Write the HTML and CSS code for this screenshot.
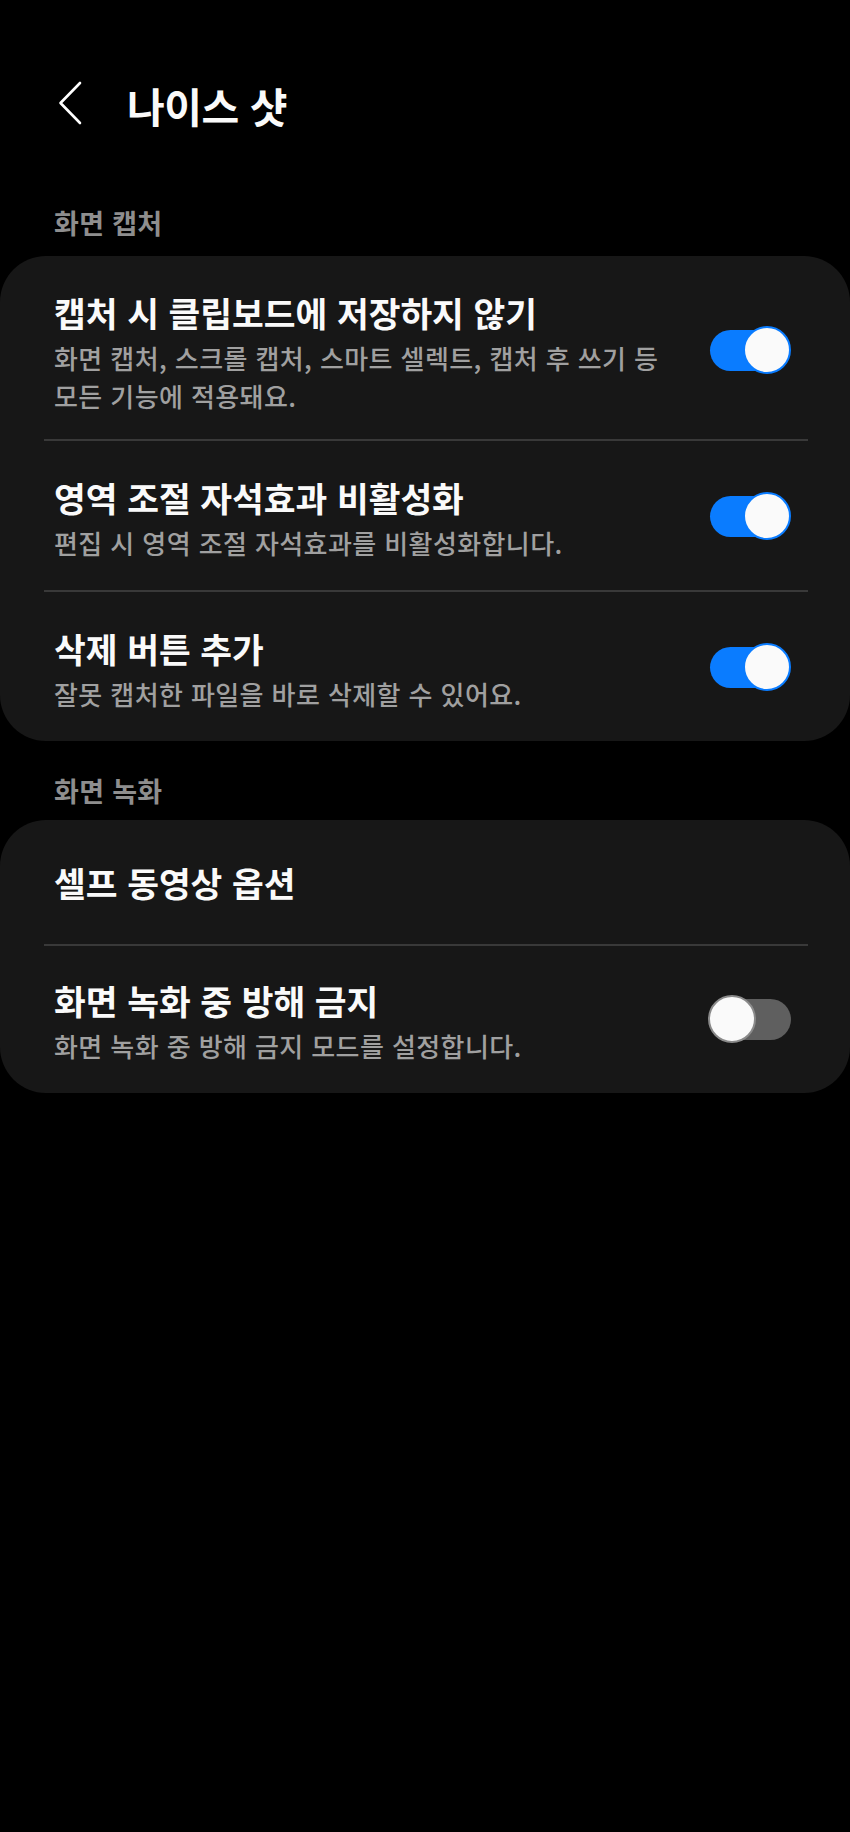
FILE: index.html
```html
<!DOCTYPE html>
<html lang="ko">
<head>
<meta charset="utf-8">
<title>나이스 샷</title>
<link rel="stylesheet" href="styles.css">
</head>
<body>
<div class="page">
  <header class="appbar">
    <svg class="back" width="24" height="44" viewBox="0 0 24 44" aria-hidden="true">
      <path d="M22 2 L2.5 22 L22 42" fill="none" stroke="#ffffff" stroke-width="2.6" stroke-linecap="round" stroke-linejoin="round"/>
    </svg>
    <h1 class="title">나이스 샷</h1>
  </header>

  <div class="section-label first">화면 캡처</div>
  <div class="card">
    <div class="item two-line">
      <div class="text">
        <div class="item-title">캡처 시 클립보드에 저장하지 않기</div>
        <div class="item-sub">화면 캡처, 스크롤 캡처, 스마트 셀렉트, 캡처 후 쓰기 등<br>모든 기능에 적용돼요.</div>
      </div>
      <div class="toggle on"><span class="knob"></span></div>
    </div>
    <div class="divider"></div>
    <div class="item">
      <div class="text">
        <div class="item-title">영역 조절 자석효과 비활성화</div>
        <div class="item-sub">편집 시 영역 조절 자석효과를 비활성화합니다.</div>
      </div>
      <div class="toggle on"><span class="knob"></span></div>
    </div>
    <div class="divider"></div>
    <div class="item">
      <div class="text">
        <div class="item-title">삭제 버튼 추가</div>
        <div class="item-sub">잘못 캡처한 파일을 바로 삭제할 수 있어요.</div>
      </div>
      <div class="toggle on"><span class="knob"></span></div>
    </div>
  </div>

  <div class="section-label">화면 녹화</div>
  <div class="card">
    <div class="item single">
      <div class="text">
        <div class="item-title">셀프 동영상 옵션</div>
      </div>
    </div>
    <div class="divider"></div>
    <div class="item last">
      <div class="text">
        <div class="item-title">화면 녹화 중 방해 금지</div>
        <div class="item-sub">화면 녹화 중 방해 금지 모드를 설정합니다.</div>
      </div>
      <div class="toggle off"><span class="knob"></span></div>
    </div>
  </div>
</div>
</body>
</html>
```

FILE: styles.css
```css
html, body {
  margin: 0;
  padding: 0;
  background: #000000;
}

body {
  font-family: "Noto Sans CJK KR", "Noto Sans", sans-serif;
  color: #ffffff;
  width: 850px;
  min-height: 1832px;
}

.page {
  display: flex;
  flex-direction: column;
}

.appbar {
  display: flex;
  align-items: center;
  padding: 79px 0 0 58px;
  gap: 45px;
  height: 52px;
}

.back {
  display: block;
  margin-top: -4px;
}

.title {
  margin: 0;
  font-size: 41px;
  line-height: 60px;
  font-weight: 700;
  color: #fafafa;
  letter-spacing: -0.5px;
}

.section-label {
  padding: 30px 0 9px 54px;
  font-size: 27px;
  line-height: 40px;
  font-weight: 700;
  color: #8e8e8e;
  letter-spacing: 0.3px;
}

.section-label.first {
  padding-top: 72px;
  padding-bottom: 13px;
}

.card {
  background: #171717;
  border-radius: 46px;
  display: flex;
  flex-direction: column;
}

.item {
  display: flex;
  align-items: center;
  padding: 31px 59px 28px 54px;
}

.item.two-line {
  padding-bottom: 24px;
}

.item.single {
  padding-top: 37px;
  padding-bottom: 37px;
}

.item.last {
  padding-top: 29px;
  padding-bottom: 28px;
}

.text {
  flex: 1;
  display: flex;
  flex-direction: column;
}

.item-title {
  font-size: 34.5px;
  line-height: 50px;
  font-weight: 700;
  color: #fafafa;
}

.item-sub {
  margin-top: 2px;
  font-size: 26px;
  line-height: 38px;
  font-weight: 500;
  color: #a0a0a0;
  letter-spacing: 0.4px;
}

.divider {
  height: 2px;
  margin: 0 42px 0 44px;
  background: #393939;
}

.toggle {
  position: relative;
  width: 81px;
  height: 50px;
  flex: none;
  margin-top: -3px;
}

.toggle::before {
  content: "";
  position: absolute;
  top: 5px;
  height: 41px;
  border-radius: 21px;
}

.toggle.on::before {
  left: 0;
  width: 76px;
  background: #0a7cff;
}

.toggle.off::before {
  left: 4px;
  width: 77px;
  background: #5f5f5f;
}

.knob {
  position: absolute;
  top: 1px;
  width: 44px;
  height: 44px;
  border-radius: 50%;
  background: #fafafa;
}

.toggle.on .knob {
  right: 0;
  border: 2px solid #0a7cff;
}

.toggle.off .knob {
  left: -2px;
  border: 2px solid #8a8a8a;
}
```
